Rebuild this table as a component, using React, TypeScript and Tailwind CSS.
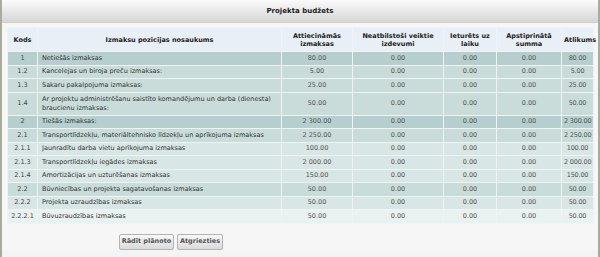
import React from 'react';

type Row = {
  code: string;
  name: string;
  amount: string;
  level: number;
  tall?: boolean;
};

const rows: Row[] = [
  { code: '1', name: 'Netiešās izmaksas', amount: '80.00', level: 1 },
  { code: '1.2', name: 'Kancelejas un biroja preču izmaksas:', amount: '5.00', level: 2 },
  { code: '1.3', name: 'Sakaru pakalpojuma izmaksas:', amount: '25.00', level: 2 },
  {
    code: '1.4',
    name: 'Ar projektu administrēšanu saistīto komandējumu un darba (dienesta) braucienu izmaksas:',
    amount: '50.00',
    level: 2,
    tall: true,
  },
  { code: '2', name: 'Tiešās izmaksas:', amount: '2 300.00', level: 1 },
  { code: '2.1', name: 'Transportlīdzekļu, materiāltehnisko līdzekļu un aprīkojuma izmaksas', amount: '2 250.00', level: 2 },
  { code: '2.1.1', name: 'Jaunradītu darba vietu aprīkojuma izmaksas', amount: '100.00', level: 3 },
  { code: '2.1.3', name: 'Transportlīdzekļu iegādes izmaksas', amount: '2 000.00', level: 3 },
  { code: '2.1.4', name: 'Amortizācijas un uzturēšanas izmaksas', amount: '150.00', level: 3 },
  { code: '2.2', name: 'Būvniecības un projekta sagatavošanas izmaksas', amount: '50.00', level: 2 },
  { code: '2.2.2', name: 'Projekta uzraudzības izmaksas', amount: '50.00', level: 3 },
  { code: '2.2.2.1', name: 'Būvuzraudzības izmaksas', amount: '50.00', level: 4 },
];

const rowBg: Record<number, string> = {
  1: 'bg-[#b6cfce]',
  2: 'bg-[#c9dcda]',
  3: 'bg-[#d8e6e5]',
  4: 'bg-[#eaf1f1]',
};

const cell = 'border border-[#eef4f4] px-[2px] py-0 text-center';

const App = () => {
  return (
    <div className="w-[600px] h-[257px] overflow-hidden bg-[#f4f4f4] border-x-2 border-[#a7ac9b] font-['DejaVu_Sans',sans-serif] text-[6.5px] text-[#333]">
      {/* Title bar */}
      <div className="h-[23px] flex items-center justify-center bg-gradient-to-b from-[#fbfbfb] to-[#d6d6d6] border-b border-[#cfcfcf]">
        <span className="font-bold text-[7px] text-[#222]">Projekta budžets</span>
      </div>

      <div className="px-[5px] pt-[4px] bg-[#f6f6f6]">
        <table className="w-[586px] table-fixed border-collapse">
          <colgroup>
            <col className="w-[30px]" />
            <col className="w-[244px]" />
            <col className="w-[71px]" />
            <col className="w-[91px]" />
            <col className="w-[53px]" />
            <col className="w-[65px]" />
            <col className="w-[32px]" />
          </colgroup>
          <thead>
            <tr className="h-[24px] bg-[#e9eff6] text-[#222] font-bold leading-[8px]">
              <th className={cell}>Kods</th>
              <th className={cell}>Izmaksu pozicijas nosaukums</th>
              <th className={cell}>Attiecināmās<br />izmaksas</th>
              <th className={cell}>Neatbilstoši veiktie<br />izdevumi</th>
              <th className={cell}>Ieturēts uz<br />laiku</th>
              <th className={cell}>Apstiprinātā<br />summa</th>
              <th className={`${cell} px-0`}>Atlikums</th>
            </tr>
          </thead>
          <tbody>
            {rows.map((r) => (
              <tr key={r.code} className={`${rowBg[r.level]} ${r.tall ? 'h-[23px]' : 'h-[13.5px]'} leading-[9px]`}>
                <td className={`${cell} text-[#444] whitespace-nowrap`}>{r.code}</td>
                <td className={`${cell} text-left pl-[4px]`}>{r.name}</td>
                <td className={`${cell} text-[#555] whitespace-nowrap`}>{r.amount}</td>
                <td className={`${cell} text-[#555]`}>0.00</td>
                <td className={`${cell} text-[#555]`}>0.00</td>
                <td className={`${cell} text-[#555]`}>0.00</td>
                <td className={`${cell} px-0 text-[#555] whitespace-nowrap tracking-[-0.2px]`}>{r.amount}</td>
              </tr>
            ))}
          </tbody>
        </table>

        {/* Buttons */}
        <div className="flex gap-[3px] pl-[112px] pt-[10px]">
          <button className="h-[16px] w-[55px] rounded-[2px] border border-[#b3b3b3] bg-gradient-to-b from-[#f8f8f8] to-[#dadada] text-[6.5px] font-semibold text-[#555]">
            Rādīt plānoto
          </button>
          <button className="h-[16px] w-[46px] rounded-[2px] border border-[#b3b3b3] bg-gradient-to-b from-[#f8f8f8] to-[#dadada] text-[6.5px] font-semibold text-[#555]">
            Atgriezties
          </button>
        </div>
      </div>
    </div>
  );
};

export default App;
